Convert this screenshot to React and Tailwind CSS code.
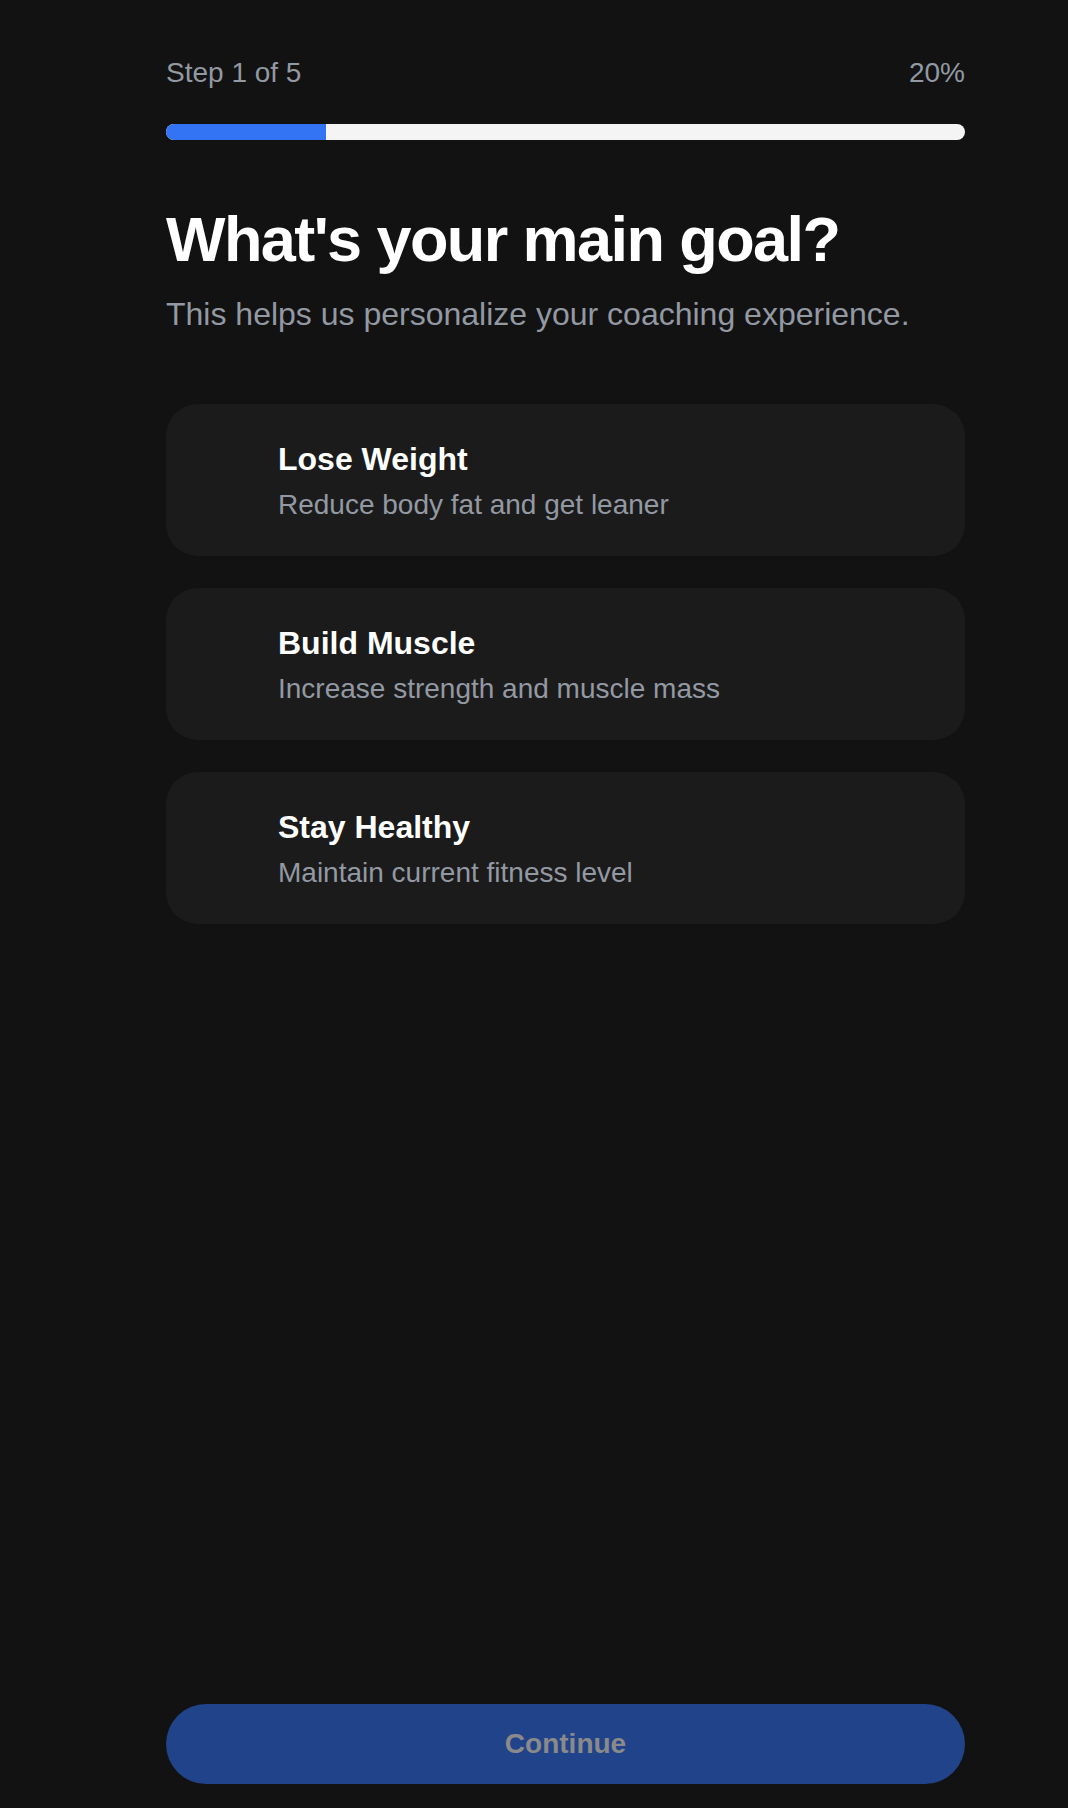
import { useState } from "react";

const goals = [
  { id: "lose", title: "Lose Weight", desc: "Reduce body fat and get leaner" },
  { id: "muscle", title: "Build Muscle", desc: "Increase strength and muscle mass" },
  { id: "healthy", title: "Stay Healthy", desc: "Maintain current fitness level" },
];

function GoalCard({ goal, selected, onSelect }) {
  return (
    <button
      type="button"
      onClick={() => onSelect(goal.id)}
      className={
        "flex w-full items-center gap-[28px] rounded-[32px] px-[28px] pt-[31px] pb-[30px] text-left " +
        (selected ? "bg-[#1d2a44]" : "bg-[#1b1b1b]")
      }
    >
      <div className="h-[56px] w-[56px] shrink-0" />
      <div className="flex flex-col">
        <span className="text-[32px] font-bold leading-[49px] text-white">
          {goal.title}
        </span>
        <span className="text-[28px] leading-[42px] text-[#9399a3]">
          {goal.desc}
        </span>
      </div>
    </button>
  );
}

export default function App() {
  const [goal, setGoal] = useState(null);

  return (
    <div
      className="flex min-h-screen flex-col bg-[#121212] pl-[166px] pr-[103px] pb-[24px]"
      style={{ fontFamily: '"Liberation Sans", Arial, sans-serif' }}
    >
      <div className="pt-[52px]">
        <div className="flex items-center justify-between text-[28px] leading-[42px] text-[#9399a3]">
          <span>Step 1 of 5</span>
          <span>20%</span>
        </div>
        <div className="mt-[30px] h-[15.75px] w-full overflow-hidden rounded-full bg-[#f4f4f4]">
          <div className="h-full w-[20%] bg-[#3374f5]" />
        </div>
      </div>

      <h1 className="mt-[62px] text-[63px] font-bold leading-[75.6px] tracking-tight text-white">
        What's your main goal?
      </h1>
      <p className="mt-[14px] text-[32px] leading-[47.25px] text-[#9399a3]">
        This helps us personalize your coaching experience.
      </p>

      <div className="mt-[65px] flex flex-col gap-[32px]">
        {goals.map((g) => (
          <GoalCard key={g.id} goal={g} selected={goal === g.id} onSelect={setGoal} />
        ))}
      </div>

      <button
        type="button"
        disabled={!goal}
        className={
          "mt-auto h-[80px] w-full rounded-full text-[28px] font-bold " +
          (goal ? "bg-[#3374f5] text-white" : "bg-[#21438a] text-[#8a8a8a]")
        }
      >
        Continue
      </button>
    </div>
  );
}
